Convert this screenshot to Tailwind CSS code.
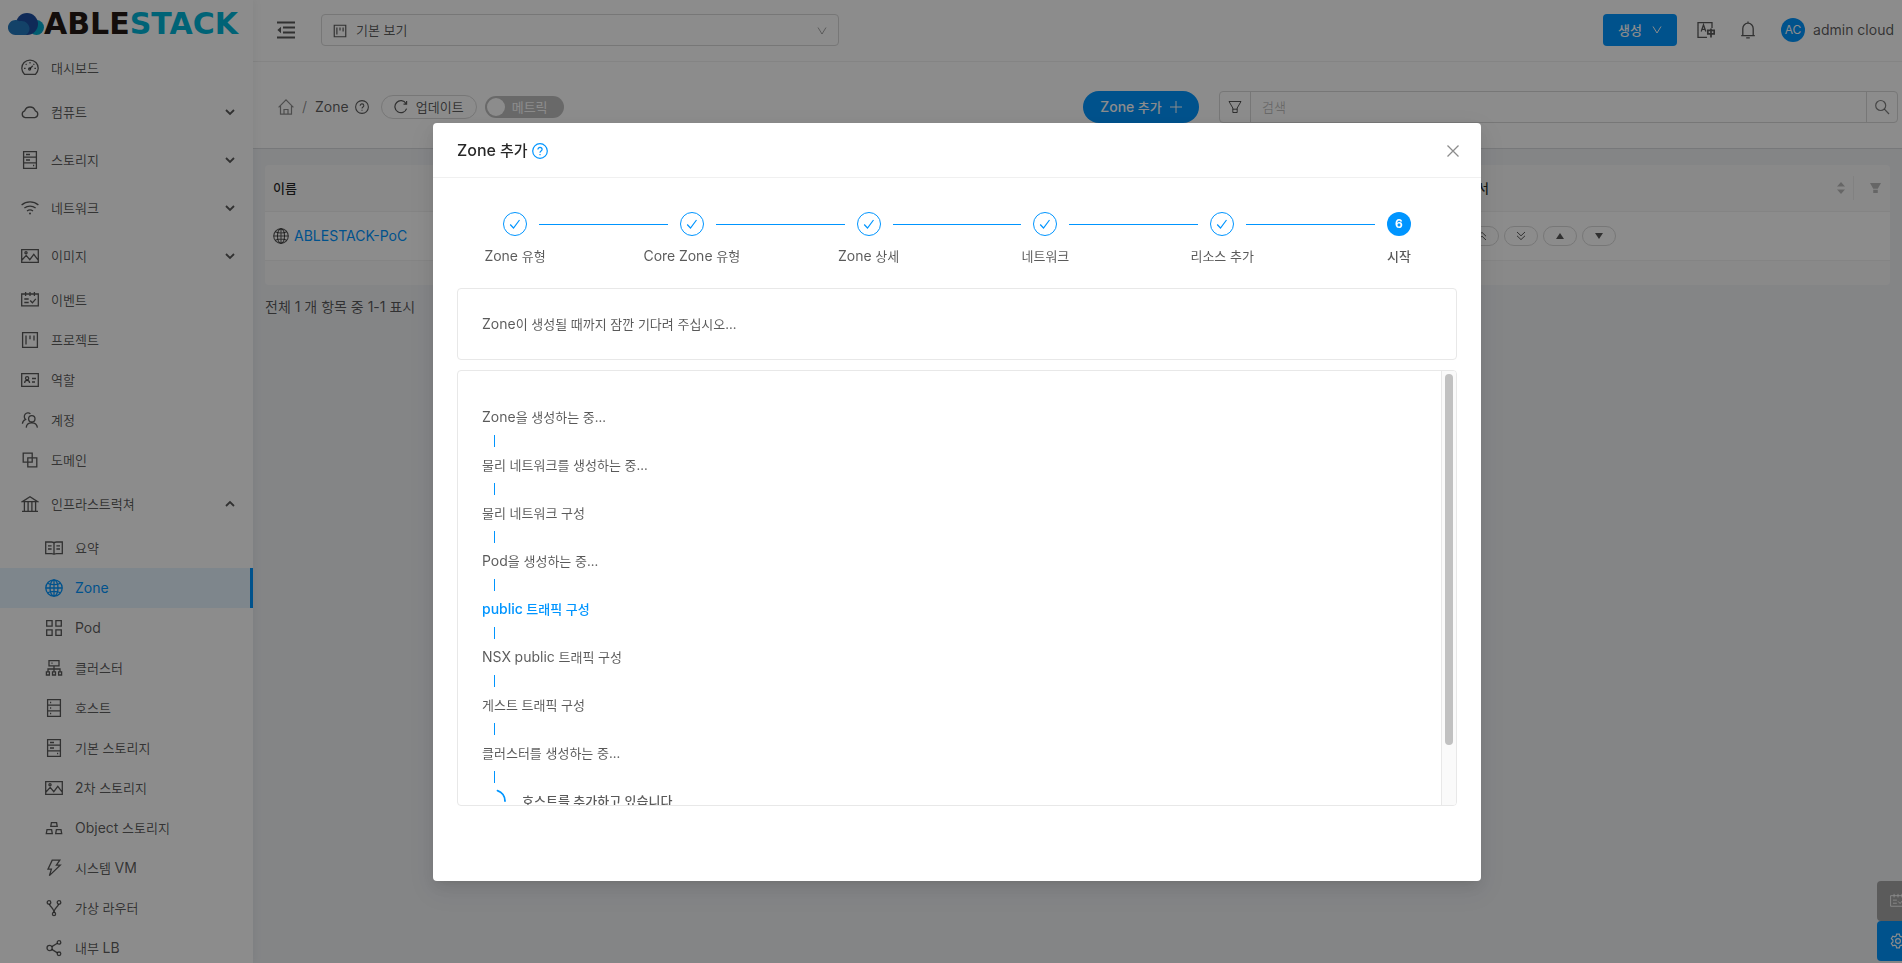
<!DOCTYPE html>
<html lang="ko">
<head>
  <meta charset="UTF-8">
  <meta name="viewport" content="width=device-width, initial-scale=1.0">
  <title>Zone - ABLESTACK</title>
  <script src="https://cdn.jsdelivr.net/npm/@tailwindcss/browser@4"></script>
</head>

<body class="h-screen overflow-hidden bg-[#f0f2f5] font-[Inter,'Noto_Sans_CJK_KR',sans-serif] text-[13px] leading-6 text-black/65">
  <!-- Icons -->
  <svg class="hidden" fill="none" stroke="currentColor">
    <symbol id="i-dashboard" viewBox="0 0 18 18"><path d="M3.6 15.4a8.2 8.2 0 1 1 10.8 0zM9 3v1.6M4.7 4.9l.9.9M3 9.3h1.6M13.4 9.3H15M13.3 4.9l-.9.9M8.8 9.8l3-3"/><circle cx="8.6" cy="10" r="1"/></symbol>
    <symbol id="i-cloud" viewBox="0 0 18 18"><path d="M4.2 14.6a3.5 3.5 0 0 1-.5-6.8 5.6 5.6 0 0 1 10.6 0 3.5 3.5 0 0 1-.5 6.8z"/></symbol>
    <symbol id="i-hdd" viewBox="0 0 18 18"><path d="M2.6.7h12.8v16.6H2.6zM2.6 6.2h12.8M2.6 11.8h12.8M5 3.5h4M5 9h4M12 14.5h1.2"/></symbol>
    <symbol id="i-host" viewBox="0 0 18 18"><path d="M2.6.7h12.8v16.6H2.6zM2.6 6.2h12.8M2.6 11.8h12.8M5 3.5h1.2M5 9h1.2M5 14.5h1.2"/></symbol>
    <symbol id="i-wifi" viewBox="0 0 18 18"><path d="M.6 6a13 13 0 0 1 16.8 0M3.4 9a9 9 0 0 1 11.2 0M6 12a5 5 0 0 1 6 0"/><circle cx="9" cy="14.6" r="1" fill="currentColor" stroke="none"/></symbol>
    <symbol id="i-picture" viewBox="0 0 18 18"><path d="M.7 2.6h16.6v12.8H.7zM1 13l4.2-4.6 3.6 4.2 4-5.2 4.2 5.4"/><circle cx="5" cy="5.8" r="1.1"/></symbol>
    <symbol id="i-schedule" viewBox="0 0 18 18"><path d="M.7 3h16.6v11.9H.7zM4.6 1v4M9 1v4M13.4 1v4M3.3 8h4.4M3.3 11.5h4.4M9.2 9.5l2.2 2.3 3.4-4"/></symbol>
    <symbol id="i-project" viewBox="0 0 18 18"><path d="M1.6 1.6h14.8v14.8H1.6zM5 4.6v8.8M9 4.6v3.6M13 4.6v5"/></symbol>
    <symbol id="i-idcard" viewBox="0 0 18 18"><path d="M.7 2.6h16.6v12.8H.7zM3.6 12c.2-3.4 4.8-3.4 5 0M11 7.5h4M11 11h3"/><circle cx="6.1" cy="7.2" r="1.6"/></symbol>
    <symbol id="i-team" viewBox="0 0 18 18"><path d="M5.2 16.6c.6-6.4 10.4-6.4 11.2 0M1.4 12.8c.2-2 1.4-3.6 3.2-4.4a3.3 3.3 0 1 1 4.8-5.6"/><circle cx="10.8" cy="7.8" r="3.2"/></symbol>
    <symbol id="i-block" viewBox="0 0 18 18"><path d="M2.2 2.2h9v9h-9zM6.8 6.8h9v9h-9z"/></symbol>
    <symbol id="i-bank" viewBox="0 0 18 18"><path d="M1.4 6.6 9 1.8l7.6 4.8zM1 16.4h16M3.4 6.6v9.8M7.1 6.6v9.8M10.9 6.6v9.8M14.6 6.6v9.8"/></symbol>
    <symbol id="i-read" viewBox="0 0 18 18"><path d="M.7 3h5.8C8 3 9 3.8 9 4.6 9 3.8 10 3 11.5 3h5.8v11.6h-5.8c-1.5 0-2.5.4-2.5 1.2 0-.8-1-1.2-2.5-1.2H.7zM9 4.6v11M3 6.8h3.6M3 10h3.6M11.4 6.8H15M11.4 10H15"/></symbol>
    <symbol id="i-globe" viewBox="0 0 18 18"><circle cx="9" cy="9" r="8.2"/><ellipse cx="9" cy="9" rx="4" ry="8.2"/><path d="M9 .8v16.4M.8 9h16.4M2.6 4.2c3.4 2 9.4 2 12.8 0M2.6 13.8c3.4-2 9.4-2 12.8 0"/></symbol>
    <symbol id="i-appstore" viewBox="0 0 18 18"><path d="M1.7 1.7h5.4v5.4H1.7zM10.9 1.7h5.4v5.4h-5.4zM1.7 10.9h5.4v5.4H1.7zM10.9 10.9h5.4v5.4h-5.4z"/></symbol>
    <symbol id="i-cluster" viewBox="0 0 18 18"><path d="M4 1.6h10v5.2H4zM6.4 4.2h1.2M9 6.8v6M3 12.6V10h12v2.6M1.4 12.8h3v3.2h-3zM7.5 12.8h3v3.2h-3zM13.6 12.8h3v3.2h-3z"/></symbol>
    <symbol id="i-gold" viewBox="0 0 18 18"><path d="M6.4 3.6h5.2l.6 3.8H5.8zM2 10.6h4.6l.7 4H1.3zM11.4 10.6H16l.7 4h-6z"/></symbol>
    <symbol id="i-thunder" viewBox="0 0 18 18"><path d="M7.2 1.2h7.6l-3.4 5h3.8L4.4 16.6l2-6.4H3z"/></symbol>
    <symbol id="i-fork" viewBox="0 0 18 18"><circle cx="4" cy="3.4" r="1.8"/><circle cx="14" cy="3.4" r="1.8"/><circle cx="9" cy="15" r="1.6"/><path d="M4.4 5.2C5 8.4 9 8.800 9 13.400M13.600 5.200C13 8.400 9 8.800 9 13.400"/></symbol>
    <symbol id="i-share" viewBox="0 0 18 18"><circle cx="4.6" cy="9" r="2.6"/><circle cx="14" cy="3.4" r="1.8"/><circle cx="14" cy="14.8" r="1.8"/><path d="M6.8 7.6l5.6-3.3M6.8 10.400l5.600 3.500"/></symbol>
    <symbol id="i-down" viewBox="0 0 10 10"><path d="M1 3l4 4 4-4"/></symbol>
    <symbol id="i-up" viewBox="0 0 10 10"><path d="M1 7l4-4 4 4"/></symbol>
    <symbol id="i-arrow" viewBox="0 0 10 10"><path d="M1 1.5l4 6.5 4-6.5"/></symbol>
    <symbol id="i-fold" viewBox="0 0 18 18"><path d="M0 1.5h18M6 6.500h12M6 11.500h12M0 16.500h18"/><path d="M4 5.800v6.400L.4 9z" fill="currentColor" stroke="none"/></symbol>
    <symbol id="i-home" viewBox="0 0 16 16"><path d="M.6 8.300 8 .9l7.400 7.400M2.500 7v8.200h11V7M6 15.200V10.500h4v4.700"/></symbol>
    <symbol id="i-question" viewBox="0 0 16 16"><circle cx="8" cy="8" r="7.3"/><path d="M5.900 6.500c0-2.800 4.200-2.800 4.200 0 0 1.600-2.100 1.500-2.100 3.200M8 11v1.300"/></symbol>
    <symbol id="i-reload" viewBox="0 0 14 14"><path d="M12.600 8.600A6 6 0 1 1 12 3.500M12.600 1v3.200H9.500"/></symbol>
    <symbol id="i-plus" viewBox="0 0 12 12"><path d="M6 0v12M0 6h12"/></symbol>
    <symbol id="i-filter" viewBox="0 0 14 14"><path d="M1 1.500h12L9.200 8v4.500H4.800V8zM4.800 9.200h4.400"/></symbol>
    <symbol id="i-search" viewBox="0 0 16 16"><circle cx="6.7" cy="6.5" r="5"/><path d="M10.400 10.200 15 15"/></symbol>
    <symbol id="i-lang" viewBox="0 0 18 18"><path d="M15 7V1.600H1v14.800h9M4.200 10.500l2.300-6.800 2.300 6.800M5 8.400h3"/><path d="M10.800 9.400h6.400v3.400h-6.400zM14 7.600v9" stroke-width="1.7"/></symbol>
    <symbol id="i-bell" viewBox="0 0 18 18"><path d="M2.200 14.600h13.600M3.800 14.600V7.400a5.200 5.200 0 0 1 10.400 0v7.200M9 .4v1.800M7.200 16.800h3.600"/></symbol>
    <symbol id="i-close" viewBox="0 0 12 12"><path d="M.5.5l11 11M11.500.5l-11 11"/></symbol>
    <symbol id="i-check" viewBox="0 0 12 12"><path d="M1.200 6.500 4.500 10l6-8"/></symbol>
    <symbol id="i-top" viewBox="0 0 10 10"><path d="M1 5.200 5 1.400l4 3.800M1 9l4-3.800L9 9"/></symbol>
    <symbol id="i-bottom" viewBox="0 0 10 10"><path d="M1 1l4 3.800L9 1M1 4.800l4 3.800 4-3.800"/></symbol>
    <symbol id="i-setting" viewBox="0 0 18 18"><path d="M7.400 1.200h3.200l.5 2.300 1.500.9 2.300-.7 1.600 2.700-1.800 1.600v2l1.800 1.600-1.600 2.700-2.300-.7-1.500.9-.5 2.300H7.400l-.5-2.300-1.500-.9-2.300.7-1.600-2.700L3.300 10V8L1.500 6.400l1.600-2.700 2.300.7 1.500-.9z"/><circle cx="9" cy="9" r="2.7"/></symbol>
  </svg>

  <div class="flex h-full">
    <!-- Sidebar -->
    <aside class="relative z-10 w-[253px] shrink-0 bg-white shadow-[2px_0_8px_rgba(29,35,41,0.05)]">
      <a href="#" class="flex h-12 items-center pl-2 font-['DejaVu_Sans',sans-serif] text-[30px] font-bold leading-none text-[#231815]">
        <svg class="h-[22px] w-9 shrink-0" viewBox="0 0 36 22">
          <circle cx="28.5" cy="14.5" r="7.5" fill="#00a9ce"/>
          <circle cx="19" cy="11" r="11" fill="#1c4da1"/>
          <path d="M7.500 22a7.500 7.500 0 1 1 4-13.800C17 7 21 11 21.500 15c.3 3-1.500 6-4 7z" fill="#2479bd"/>
        </svg>
        <span>ABLE</span><span class="text-[#00b4d8]">STACK</span>
      </a>
      <nav id="menu"></nav>
    </aside>

    <div class="flex min-w-0 flex-1 flex-col">
      <!-- Header -->
      <header class="flex h-[62px] shrink-0 items-center border-b border-[#f0f0f0] bg-white pb-2.5 pl-6 pr-2 pt-2">
        <button aria-label="메뉴 접기"><svg class="size-[18px]" fill="none" stroke="currentColor" stroke-width="1.8"><use href="#i-fold"/></svg></button>
        <div class="relative ml-[26px] h-8 w-[518px]">
          <select aria-label="보기" class="size-full appearance-none rounded border border-[#d9d9d9] bg-white pl-[34px]"><option>기본 보기</option></select>
          <svg class="pointer-events-none absolute left-3 top-2.5 size-[14px]" fill="none" stroke="currentColor" stroke-width="1.5"><use href="#i-project"/></svg>
          <svg class="pointer-events-none absolute right-3 top-3 size-2.5 text-black/35" fill="none" stroke="currentColor"><use href="#i-arrow"/></svg>
        </div>
        <button class="ml-auto flex h-8 w-[74px] items-center justify-center gap-2.5 rounded bg-[#0095ff] font-medium text-white">생성<svg class="size-2.5" fill="none" stroke="currentColor"><use href="#i-arrow"/></svg></button>
        <button class="ml-5" aria-label="언어"><svg class="size-[18px]" fill="none" stroke="currentColor" stroke-width="1.3"><use href="#i-lang"/></svg></button>
        <button class="ml-6" aria-label="알림"><svg class="size-[18px]" fill="none" stroke="currentColor" stroke-width="1.3"><use href="#i-bell"/></svg></button>
        <span class="ml-6 grid size-6 place-items-center rounded-full bg-[#0095ff] text-xs text-white">AC</span>
        <span class="ml-2 text-sm">admin cloud</span>
      </header>

      <!-- Breadcrumb and actions -->
      <div class="flex h-[87px] shrink-0 items-center border-b border-[#d9dbde] bg-white pl-[25px] pr-1 pt-1">
        <a href="#" aria-label="홈" class="text-black/45"><svg class="size-4" fill="none" stroke="currentColor" stroke-width="1.2"><use href="#i-home"/></svg></a>
        <span class="ml-2 text-sm text-black/45">/</span>
        <span class="ml-2 text-sm">Zone</span>
        <svg class="ml-1.5 size-[14px]" fill="none" stroke="currentColor" stroke-width="1.2"><use href="#i-question"/></svg>
        <button class="ml-3 flex h-6 w-24 items-center justify-center gap-2 rounded-full border border-[#d9d9d9]"><svg class="size-[14px]" fill="none" stroke="currentColor" stroke-width="1.2"><use href="#i-reload"/></svg>업데이트</button>
        <button role="switch" aria-checked="false" class="ml-2 flex h-[22px] w-[79px] items-center gap-[7px] rounded-full bg-black/25 pl-0.5 text-[13px] text-white"><span class="size-[18px] rounded-full bg-white"></span>메트릭</button>
        <button class="ml-auto flex h-8 w-[116px] items-center justify-center gap-2 rounded-full bg-[#0095ff] font-medium text-white"><span><span class="text-sm leading-none">Zone</span> 추가</span><svg class="size-3" fill="none" stroke="currentColor"><use href="#i-plus"/></svg></button>
        <div class="ml-5 flex h-8 w-[679px] rounded border border-[#d9d9d9]">
          <button class="grid w-[31px] place-items-center border-r border-[#d9d9d9]" aria-label="필터"><svg class="size-[14px]" fill="none" stroke="currentColor"><use href="#i-filter"/></svg></button>
          <input type="text" placeholder="검색" aria-label="검색" class="min-w-0 flex-1 px-[11px] placeholder:text-black/25">
          <button class="grid w-[31px] place-items-center border-l border-[#d9d9d9]" aria-label="검색 실행"><svg class="size-4 text-black/50" fill="none" stroke="currentColor" stroke-width="1.2"><use href="#i-search"/></svg></button>
        </div>
      </div>

      <!-- Zone list -->
      <main class="pl-3 pr-3 pt-4">
        <div class="overflow-hidden rounded bg-[#fafafa]">
          <table class="w-full table-fixed text-left">
            <thead>
              <tr class="h-[46px] border-b border-[#f0f0f0] text-black/85">
                <th class="pl-2 font-medium">이름</th>
                <th class="w-[397px] pl-2 font-medium">
                  <div class="flex h-6 items-center justify-between border-r border-[#ebebeb] pr-2">순서
                    <svg class="h-3 w-2 text-black/25" viewBox="0 0 8 12" fill="currentColor"><path d="M4 0l4 4.500H0zM4 12l4-4.500H0z"/></svg>
                  </div>
                </th>
                <th class="w-9 pl-4"><svg class="h-2.5 w-[11px] text-black/25" viewBox="0 0 11 10" fill="currentColor"><path d="M0 0h11L7.800 5.800H3.200zM3.200 6.800h4.600V10H3.200z"/></svg></th>
              </tr>
            </thead>
            <tbody class="bg-white">
              <tr class="h-[49px] border-b border-[#f0f0f0]">
                <td class="pl-2"><a href="#" class="flex items-center gap-[5px] text-sm text-[#0095ff]"><svg class="size-4 text-black/65" fill="none" stroke="currentColor" stroke-width="1.2"><use href="#i-globe"/></svg>ABLESTACK-PoC</a></td>
                <td colspan="2" class="pl-2">
                  <div class="flex gap-[5px]">
                    <button class="grid h-5 w-[34px] place-items-center rounded-full border border-[#d9d9d9]" aria-label="맨 위로"><svg class="size-2.5" fill="none" stroke="currentColor"><use href="#i-top"/></svg></button>
                    <button class="grid h-5 w-[34px] place-items-center rounded-full border border-[#d9d9d9]" aria-label="맨 아래로"><svg class="size-2.5" fill="none" stroke="currentColor"><use href="#i-bottom"/></svg></button>
                    <button class="grid h-5 w-[34px] place-items-center rounded-full border border-[#d9d9d9]" aria-label="위로"><svg class="h-1.5 w-2" viewBox="0 0 8 6" fill="currentColor"><path d="M4 0l4 6H0z"/></svg></button>
                    <button class="grid h-5 w-[34px] place-items-center rounded-full border border-[#d9d9d9]" aria-label="아래로"><svg class="h-1.5 w-2" viewBox="0 0 8 6" fill="currentColor"><path d="M4 6l4-6H0z"/></svg></button>
                  </div>
                </td>
              </tr>
            </tbody>
          </table>
          <div class="h-6"></div>
        </div>
        <p class="mt-2.5 text-sm leading-6">전체 1 개 항목 중 1-1 표시</p>
      </main>
    </div>
  </div>

  <!-- Floating buttons -->
  <div class="fixed bottom-0.5 right-0 w-[25px] text-white">
    <button class="flex h-10 w-full items-center overflow-hidden rounded-l bg-[#a6a6a6] pl-[13px]" aria-label="이벤트"><svg class="size-4 shrink-0" fill="none" stroke="currentColor"><use href="#i-schedule"/></svg></button>
    <button class="flex h-10 w-full items-center overflow-hidden rounded-l bg-[#0095ff] pl-[13px]" aria-label="설정"><svg class="size-4 shrink-0" fill="none" stroke="currentColor" stroke-width="1.3"><use href="#i-setting"/></svg></button>
  </div>

  <!-- Zone dialog -->
  <div class="fixed inset-0 z-20 flex items-start justify-center bg-black/45 pl-3 pt-[123px]">
    <div role="dialog" aria-labelledby="dialog-title" class="w-[1048px] max-w-full rounded bg-white shadow-[0_3px_6px_-4px_rgba(0,0,0,0.12),0_6px_16px_rgba(0,0,0,0.08),0_9px_28px_8px_rgba(0,0,0,0.05)]">
      <div class="flex h-[55px] items-center border-b border-[#f0f0f0] pl-6 pr-[22px] pt-0.5">
        <h2 id="dialog-title" class="text-[15px] font-medium text-black/85"><span class="text-base leading-none">Zone</span> 추가</h2>
        <svg class="ml-1 size-4 text-[#0095ff]" fill="none" stroke="currentColor" stroke-width="1.2"><use href="#i-question"/></svg>
        <button class="ml-auto text-black/45" aria-label="닫기"><svg class="size-3" fill="none" stroke="currentColor" stroke-width="1.3"><use href="#i-close"/></svg></button>
      </div>
      <div class="px-6 pb-[75px] pt-[34px]">
        <ol id="steps" class="flex"></ol>
        <div class="mt-5 flex h-[72px] items-center rounded-sm border border-[#e8e8e8] px-6"><p><span class="text-sm leading-none">Zone</span>이 생성될 때까지 잠깐 기다려 주십시오...</p></div>
        <div class="mt-2.5 flex h-[436px] overflow-hidden rounded-sm border border-[#e8e8e8]">
          <ul id="progress" class="flex-1 overflow-hidden px-6 pt-[34px]"></ul>
          <div class="w-[15px] border-l border-[#e8e8e8] bg-[#fafafa] px-[3px] pt-[3px]"><div class="h-[371px] w-2 rounded-full bg-[#c1c1c1]"></div></div>
        </div>
      </div>
    </div>
  </div>

  <script>
    const menu = [
      { icon: 'i-dashboard', label: '대시보드' },
      { icon: 'i-cloud', label: '컴퓨트', arrow: 'i-down' },
      { icon: 'i-hdd', label: '스토리지', arrow: 'i-down' },
      { icon: 'i-wifi', label: '네트워크', arrow: 'i-down' },
      { icon: 'i-picture', label: '이미지', arrow: 'i-down' },
      { icon: 'i-schedule', label: '이벤트' },
      { icon: 'i-project', label: '프로젝트' },
      { icon: 'i-idcard', label: '역할' },
      { icon: 'i-team', label: '계정' },
      { icon: 'i-block', label: '도메인' },
      { icon: 'i-bank', label: '인프라스트럭쳐', arrow: 'i-up' },
      { icon: 'i-read', label: '요약', sub: true },
      { icon: 'i-globe', label: 'Zone', sub: true, active: true },
      { icon: 'i-appstore', label: 'Pod', sub: true },
      { icon: 'i-cluster', label: '클러스터', sub: true },
      { icon: 'i-host', label: '호스트', sub: true },
      { icon: 'i-hdd', label: '기본 스토리지', sub: true },
      { icon: 'i-picture', label: '2차 스토리지', sub: true },
      { icon: 'i-gold', label: 'Object 스토리지', sub: true },
      { icon: 'i-thunder', label: '시스템 VM', sub: true },
      { icon: 'i-fork', label: '가상 라우터', sub: true },
      { icon: 'i-share', label: '내부 LB', sub: true }
    ];

    const steps = ['Zone 유형', 'Core Zone 유형', 'Zone 상세', '네트워크', '리소스 추가', '시작'];

    const progress = [
      'Zone을 생성하는 중...',
      '물리 네트워크를 생성하는 중...',
      '물리 네트워크 구성',
      'Pod을 생성하는 중...',
      'public 트래픽 구성',
      'NSX public 트래픽 구성',
      '게스트 트래픽 구성',
      '클러스터를 생성하는 중...'
    ];

    // Latin runs are set one size larger than the Hangul next to them
    function mixed(text) {
      return text.replace(/[A-Za-z0-9]+/g, '<span class="text-sm leading-none">$&</span>');
    }

    document.getElementById('menu').innerHTML = menu.map(item => `
      <a href="#" class="flex items-center ${item.arrow ? 'h-12' : 'h-10'} ${item.sub ? 'pl-[45px]' : 'pl-[21px]'} ${item.active ? 'border-r-3 border-[#0095ff] bg-[#e6f4ff] text-[#0095ff]' : ''}">
        <svg class="size-[18px]" fill="none" stroke="currentColor" stroke-width="1.3"><use href="#${item.icon}"/></svg>
        <span class="ml-3">${mixed(item.label)}</span>
        ${item.arrow ? `<svg class="ml-auto mr-[18px] size-2.5" fill="none" stroke="currentColor" stroke-width="1.8"><use href="#${item.arrow}"/></svg>` : ''}
      </a>
    `).join('');

    document.getElementById('steps').innerHTML = steps.map((label, i) => {
      const last = i === steps.length - 1;
      return `
        <li class="${last ? 'w-[116px]' : 'flex-1'}">
          <div class="flex items-center pl-[46px]">
            ${last
              ? `<span class="grid size-6 place-items-center rounded-full bg-[#0095ff] text-xs font-bold text-white">${i + 1}</span>`
              : `<span class="grid size-6 place-items-center rounded-full border border-[#0095ff] text-[#0095ff]"><svg class="size-3" fill="none" stroke="currentColor" stroke-width="1.2"><use href="#i-check"/></svg></span>
                 <span class="-mr-[34px] ml-3 h-px flex-1 bg-[#0095ff]"></span>`}
          </div>
          <div class="mt-2 w-[116px] text-center ${last ? 'font-medium' : ''}">${mixed(label)}</div>
        </li>
      `;
    }).join('');

    document.getElementById('progress').innerHTML = progress.map(text => `
      <li>
        <div class="h-6 ${text.startsWith('public') ? 'font-medium text-[#0095ff]' : ''}">${mixed(text)}</div>
        <div class="ml-3 h-6 py-1.5"><div class="h-3 w-px bg-[#0095ff]"></div></div>
      </li>
    `).join('') + `
      <li class="flex h-6 items-center gap-4 font-medium">
        <svg class="size-6 text-[#0095ff]" viewBox="0 0 24 24" fill="none" stroke="currentColor" stroke-width="1.8" stroke-linecap="round"><path d="M15.500 1.600A11 11 0 0 1 23 12"/></svg>
        호스트를 추가하고 있습니다
      </li>
    `;
  </script>
</body>
</html>
